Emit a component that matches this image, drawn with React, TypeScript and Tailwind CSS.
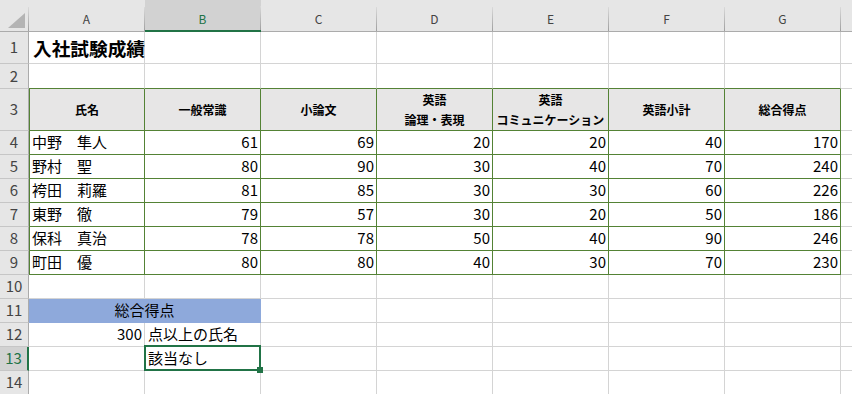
import type { ReactNode } from 'react';

const COLS = ['A', 'B', 'C', 'D', 'E', 'F', 'G'];

type Score = { name: string; values: number[] };

const scores: Score[] = [
  { name: '中野　隼人', values: [61, 69, 20, 20, 40, 170] },
  { name: '野村　聖', values: [80, 90, 30, 40, 70, 240] },
  { name: '袴田　莉羅', values: [81, 85, 30, 30, 60, 226] },
  { name: '東野　徹', values: [79, 57, 30, 20, 50, 186] },
  { name: '保科　真治', values: [78, 78, 50, 40, 90, 246] },
  { name: '町田　優', values: [80, 80, 40, 30, 70, 230] },
];

const headings: string[][] = [
  ['氏名'],
  ['一般常識'],
  ['小論文'],
  ['英語', '論理・表現'],
  ['英語', 'コミュニケーション'],
  ['英語小計'],
  ['総合得点'],
];

// plain gridline cell, table cell (green frame) and the trailing partial column
const GRID = 'border-r border-b border-[#d4d4d4]';
const TABLE = 'border-r border-b border-[#548235]';
const TAIL = 'border-b border-[#d4d4d4]';

function Separator() {
  return <span className="h-[24px] w-px self-end bg-linear-to-b from-[#dadada] to-[#9f9f9f]" />;
}

function Corner() {
  return (
    <div className="flex border-b border-[#ababab] bg-[#e6e6e6]">
      <div className="flex flex-1 items-end justify-end pb-[3px] pr-[3px]">
        <svg width="17" height="15" viewBox="0 0 17 15">
          <polygon points="17,0 17,15 0,15" fill="#b4b4b4" />
        </svg>
      </div>
      <Separator />
    </div>
  );
}

function ColHead({ label, active }: { label: string; active?: boolean }) {
  return (
    <div
      className={
        active
          ? 'flex border-b-2 border-[#217346] bg-[#d2d2d2] text-[#217346]'
          : 'flex border-b border-[#ababab] bg-[#e6e6e6] text-[#444]'
      }
    >
      <span className="flex flex-1 items-center justify-center pt-[7px] text-[12px]">{label}</span>
      <Separator />
    </div>
  );
}

function RowHead({ n, active }: { n: number; active?: boolean }) {
  return (
    <div
      className={
        active
          ? 'flex items-center justify-center border-b border-r-2 border-b-[#c6c6c6] border-r-[#217346] bg-[#d2d2d2] text-[15px] text-[#217346]'
          : 'flex items-center justify-center border-b border-r border-b-[#c6c6c6] border-r-[#ababab] bg-[#e6e6e6] text-[15px] text-[#444]'
      }
    >
      {n}
    </div>
  );
}

function Cell({ className, children }: { className: string; children?: ReactNode }) {
  return <div className={`flex items-end pb-[2px] text-[15px] leading-[20px] whitespace-nowrap ${className}`}>{children}</div>;
}

function Blank({ n }: { n: number }) {
  return (
    <>
      <RowHead n={n} />
      {COLS.map((c) => (
        <div key={c} className={GRID} />
      ))}
      <div className={TAIL} />
    </>
  );
}

export default function App() {
  return (
    <div className="h-[394px] w-[852px] overflow-hidden bg-white font-['Noto_Sans_CJK_JP','Noto_Sans',sans-serif] text-black">
      <div className="grid grid-cols-[29px_repeat(7,116px)_1fr] grid-rows-[32px_32px_25px_42px_repeat(11,24px)]">
        {/* column letters */}
        <Corner />
        {COLS.map((c) => (
          <ColHead key={c} label={c} active={c === 'B'} />
        ))}
        <div className="border-b border-[#ababab] bg-[#e6e6e6]" />

        {/* row 1: title */}
        <RowHead n={1} />
        <div className={`${GRID} flex items-center pl-[4px] text-[18.67px] font-bold whitespace-nowrap`}>入社試験成績</div>
        {COLS.slice(1).map((c) => (
          <div key={c} className={GRID} />
        ))}
        <div className={TAIL} />

        {/* row 2 */}
        <RowHead n={2} />
        {COLS.map((c) => (
          <div key={c} className="border-r border-b border-r-[#d4d4d4] border-b-[#548235]" />
        ))}
        <div className={TAIL} />

        {/* row 3: table headings */}
        <RowHead n={3} />
        {headings.map((lines, i) => (
          <div
            key={i}
            className={`${TABLE} ${i === 0 ? 'border-l' : ''} flex flex-col items-center justify-center bg-[#e7e6e6] text-[12px] font-bold leading-[20px] whitespace-nowrap`}
          >
            {lines.map((l) => (
              <span key={l}>{l}</span>
            ))}
          </div>
        ))}
        <div className={TAIL} />

        {/* rows 4-9: scores */}
        {scores.map((s, r) => (
          <div key={s.name} className="contents">
            <RowHead n={r + 4} />
            <Cell className={`${TABLE} border-l pl-[2px]`}>{s.name}</Cell>
            {s.values.map((v, i) => (
              <Cell key={i} className={`${TABLE} justify-end pr-[2px]`}>
                {v}
              </Cell>
            ))}
            <div className={TAIL} />
          </div>
        ))}

        <Blank n={10} />

        {/* row 11: merged label */}
        <RowHead n={11} />
        <Cell className="col-span-2 justify-center border-r border-b border-[#8ea9db] bg-[#8ea9db]">総合得点</Cell>
        {COLS.slice(2).map((c) => (
          <div key={c} className={GRID} />
        ))}
        <div className={TAIL} />

        {/* row 12 */}
        <RowHead n={12} />
        <Cell className={`${GRID} justify-end pr-[2px]`}>300</Cell>
        <Cell className={`${GRID} pl-[3px]`}>点以上の氏名</Cell>
        {COLS.slice(2).map((c) => (
          <div key={c} className={GRID} />
        ))}
        <div className={TAIL} />

        {/* row 13: active cell B13 */}
        <RowHead n={13} active />
        <div className={GRID} />
        <Cell className={`${GRID} relative pl-[3px]`}>
          該当なし
          <span className="absolute -top-[2px] -right-px -bottom-px -left-px border-2 border-[#217346]" />
          <span className="absolute -right-[3px] -bottom-[3px] h-[6px] w-[6px] bg-[#217346]" />
        </Cell>
        {COLS.slice(2).map((c) => (
          <div key={c} className={GRID} />
        ))}
        <div className={TAIL} />

        <Blank n={14} />
      </div>
    </div>
  );
}
